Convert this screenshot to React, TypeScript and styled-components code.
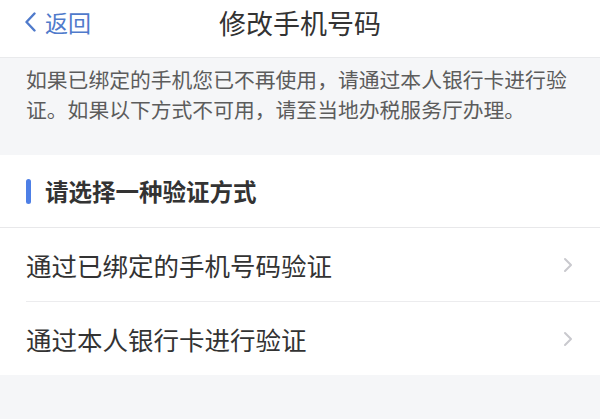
import React from "react";
import styled, { createGlobalStyle } from "styled-components";

const GlobalStyle = createGlobalStyle`
  html, body {
    margin: 0;
    padding: 0;
    background: #f5f6f8;
  }
  body {
    font-family: "Noto Sans CJK SC", "Noto Sans", sans-serif;
    -webkit-font-smoothing: antialiased;
  }
`;

const Page = styled.div`
  width: 600px;
  height: 419px;
  background: #f5f6f8;
  overflow: hidden;
`;

const NavBar = styled.div`
  height: 44px;
  padding-bottom: 13px;
  background: #fff;
  border-bottom: 1px solid #e9eaec;
  box-sizing: content-box;
  display: grid;
  grid-template-columns: 1fr auto 1fr;
  align-items: center;
`;

const BackButton = styled.div`
  display: flex;
  align-items: center;
  gap: 9px;
  padding-left: 25px;
  color: #4f7acb;
  font-size: 23px;
  line-height: 1;
`;

const Title = styled.div`
  font-size: 27px;
  color: #333;
  line-height: 1;
`;

const Notice = styled.div`
  padding: 6px 24px 0 26px;
  height: 97px;
  box-sizing: border-box;
  font-size: 20.8px;
  line-height: 30px;
  color: #5c5c5c;
`;

const Card = styled.div`
  background: #fff;
`;

const SectionHeader = styled.div`
  height: 72px;
  display: flex;
  align-items: center;
  gap: 14px;
  padding-left: 26px;
  border-bottom: 1px solid #e8e8ea;
  font-size: 23.5px;
  font-weight: 700;
  color: #333;
`;

const AccentBar = styled.span`
  width: 5px;
  height: 25px;
  border-radius: 3px;
  background: #4d7fe6;
`;

const Row = styled.div<{ $last?: boolean }>`
  margin-left: 26px;
  height: 73px;
  padding-right: 27px;
  display: flex;
  align-items: center;
  justify-content: space-between;
  border-bottom: ${(p) => (p.$last ? "none" : "1px solid #ececee")};
  font-size: 25.5px;
  color: #333;
`;

const Chevron = ({ color, w, h, sw }: { color: string; w: number; h: number; sw: number }) => (
  <svg width={w} height={h} viewBox={`0 0 ${w} ${h}`} fill="none">
    <polyline
      points={`${sw},${sw} ${w - sw},${h / 2} ${sw},${h - sw}`}
      stroke={color}
      strokeWidth={sw}
      strokeLinecap="round"
      strokeLinejoin="round"
    />
  </svg>
);

const BackChevron = () => (
  <svg width="11" height="20" viewBox="0 0 11 20" fill="none">
    <polyline
      points="9.5,1.5 1.5,10 9.5,18.5"
      stroke="#4f7acb"
      strokeWidth="2.4"
      strokeLinecap="round"
      strokeLinejoin="round"
    />
  </svg>
);

const options = ["通过已绑定的手机号码验证", "通过本人银行卡进行验证"];

export default function App() {
  return (
    <>
      <GlobalStyle />
      <Page>
        <NavBar>
          <BackButton>
            <BackChevron />
            返回
          </BackButton>
          <Title>修改手机号码</Title>
          <div />
        </NavBar>
        <Notice>
          如果已绑定的手机您已不再使用，请通过本人银行卡进行验证。如果以下方式不可用，请至当地办税服务厅办理。
        </Notice>
        <Card>
          <SectionHeader>
            <AccentBar />
            请选择一种验证方式
          </SectionHeader>
          {options.map((o, i) => (
            <Row key={o} $last={i === options.length - 1}>
              {o}
              <Chevron color="#c9c9ce" w={10} h={16} sw={2} />
            </Row>
          ))}
        </Card>
      </Page>
    </>
  );
}
